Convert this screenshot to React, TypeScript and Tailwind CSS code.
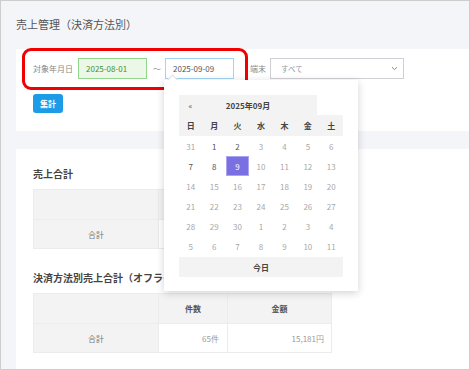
import React from "react";

const font = { fontFamily: '"Noto Sans CJK JP", "Noto Sans", sans-serif' };

type Day = { d: number; dark?: boolean; sel?: boolean };

const weeks: Day[][] = [
  [{ d: 31 }, { d: 1, dark: true }, { d: 2, dark: true }, { d: 3 }, { d: 4 }, { d: 5 }, { d: 6 }],
  [{ d: 7, dark: true }, { d: 8, dark: true }, { d: 9, sel: true }, { d: 10 }, { d: 11 }, { d: 12 }, { d: 13 }],
  [{ d: 14 }, { d: 15 }, { d: 16 }, { d: 17 }, { d: 18 }, { d: 19 }, { d: 20 }],
  [{ d: 21 }, { d: 22 }, { d: 23 }, { d: 24 }, { d: 25 }, { d: 26 }, { d: 27 }],
  [{ d: 28 }, { d: 29 }, { d: 30 }, { d: 1 }, { d: 2 }, { d: 3 }, { d: 4 }],
  [{ d: 5 }, { d: 6 }, { d: 7 }, { d: 8 }, { d: 9 }, { d: 10 }, { d: 11 }],
];

function SummaryTable({ head, count, amount }: { head: boolean; count: string; amount: string }) {
  return (
    <div className="w-[299px] border border-[#ececec] text-[8px] leading-[11px]">
      <div className="flex h-[29px] bg-[#f3f3f3] font-bold text-[#555]">
        <div className="w-[125px] border-r border-[#ececec]" />
        <div className="flex w-[69px] items-center justify-center border-r border-[#ececec]">{head ? "件数" : ""}</div>
        <div className="flex flex-1 items-center justify-center">{head ? "金額" : ""}</div>
      </div>
      <div className="flex h-[29px] border-t border-[#ececec]">
        <div className="flex w-[125px] items-center justify-center border-r border-[#ececec] bg-[#f3f3f3] text-[#777]">合計</div>
        <div className="flex w-[69px] items-center justify-end border-r border-[#ececec] pr-[8px] text-[#9a9a9a]">{count}</div>
        <div className="flex flex-1 items-center justify-end pr-[7px] text-[#9a9a9a]">{amount}</div>
      </div>
    </div>
  );
}

export default function App() {
  return (
    <div
      className="relative flex h-[370px] w-[470px] flex-col overflow-hidden border border-[#cdcdcd] bg-[#f4f5f9]"
      style={font}
    >
      {/* Title */}
      <div className="flex h-[48px] items-center pb-[1px] pl-[15px] text-[11px] text-[#555]">
        売上管理（決済方法別）
      </div>

      {/* Filter card */}
      <div className="ml-[15px] h-[82px] bg-white pl-[17px] pt-[9px]">
        <div className="flex h-[21px] items-center text-[8px] leading-[11px]">
          <span className="text-[#888]">対象年月日</span>
          <div className="ml-[5px] flex h-[21px] w-[69px] items-center border border-[#93d58c] bg-[#ebf8e7] pl-[7px] text-[#3f8f3a]">
            2025-08-01
          </div>
          <span className="ml-[6px] text-[#999]">〜</span>
          <div className="ml-[4px] flex h-[21px] w-[69px] items-center border border-[#a3d4f3] bg-white pl-[7px] text-[#555]">
            2025-09-09
          </div>
          <span className="ml-[16px] text-[#888]">端末</span>
          <div className="ml-[4px] flex h-[21px] w-[134px] items-center justify-between border border-[#cfcfd4] bg-white pl-[10px] pr-[5px] text-[7.5px] text-[#999]">
            <span>すべて</span>
            <svg width="7" height="5" viewBox="0 0 7 5" fill="none">
              <path d="M1 1.2 L3.5 3.6 L6 1.2" stroke="#888" strokeWidth="1" />
            </svg>
          </div>
        </div>
        <div className="mt-[15px] flex h-[19px] w-[30px] items-center justify-center rounded-[3px] bg-[#1b9be8] text-[8px] font-bold leading-[11px] text-white">
          集計
        </div>
      </div>

      {/* Results card */}
      <div className="ml-[15px] mt-[18px] flex-1 bg-white pl-[17px] pt-[17px]">
        <div className="h-[15px] text-[10px] font-bold leading-[15px] text-[#444]">売上合計</div>
        <div className="mt-[8px]">
          <SummaryTable head={false} count="" amount="" />
        </div>
        <div className="mt-[21px] h-[15px] text-[10px] font-bold leading-[15px] text-[#444]">
          決済方法別売上合計（オフライン）
        </div>
        <div className="mt-[8px]">
          <SummaryTable head={true} count="65件" amount="15,181円" />
        </div>
      </div>

      {/* Red annotation */}
      <div className="pointer-events-none absolute left-[21px] top-[47px] h-[42px] w-[226px] rounded-[9px] border-[3px] border-[#f00000]" />

      {/* Calendar popup */}
      <div className="absolute left-[163px] top-[79px] w-[194px] bg-white px-[15px] pb-[14px] pt-[15px] text-[8px] leading-[11px] shadow-[0_2px_8px_rgba(0,0,0,0.18)]">
        <div className="absolute left-[5px] top-[-4px] h-[7px] w-[7px] rotate-45 border-l border-t border-[#e2e2e2] bg-white" />
        <div className="flex h-[20px] text-[#444]">
          <div className="flex w-[138px] items-center bg-[#f3f3f3]">
            <span className="flex w-[23px] justify-center text-[#555]">«</span>
            <span className="flex w-[92px] justify-center font-bold">2025年09月</span>
          </div>
        </div>
        <div className="grid h-[21px] grid-cols-7 items-center bg-[#f3f3f3] font-bold text-[#444]">
          {["日", "月", "火", "水", "木", "金", "土"].map((w) => (
            <div key={w} className="text-center">
              {w}
            </div>
          ))}
        </div>
        {weeks.map((wk, i) => (
          <div key={i} className="grid h-[20px] grid-cols-7">
            {wk.map((day, j) => (
              <div
                key={j}
                className={
                  day.sel
                    ? "flex items-center justify-center border border-[#aaa4f2] bg-[#7b70e2] text-white"
                    : day.dark
                    ? "flex items-center justify-center text-[#555]"
                    : "flex items-center justify-center text-[#a8a8a8]"
                }
              >
                {day.d}
              </div>
            ))}
          </div>
        ))}
        <div className="mt-[1px] flex h-[20px] items-center justify-center bg-[#f3f3f3] font-bold text-[#444]">
          今日
        </div>
      </div>
    </div>
  );
}
